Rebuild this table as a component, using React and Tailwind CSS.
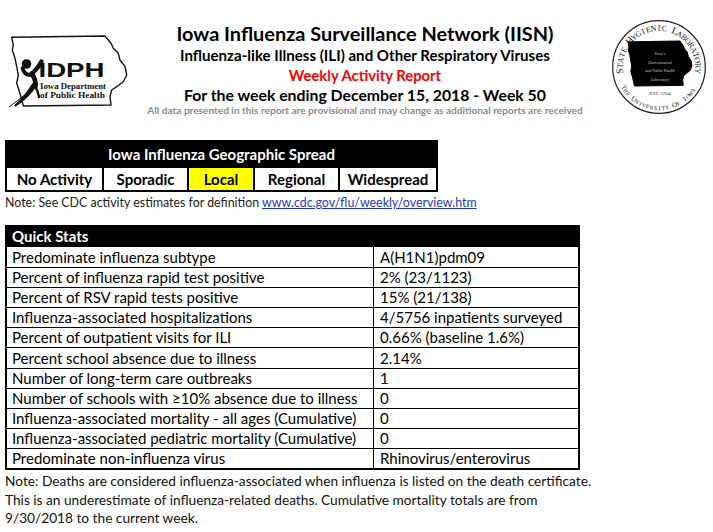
import React from "react";

const IOWA_PTS = [
  [6.7, 7.3], [100, 6], [106, 13.3], [108.3, 18.3], [113.3, 23.3], [115, 30], [120, 36.7],
  [121.7, 45], [118.3, 51.7], [111.7, 56.7], [106.7, 60], [105, 66.7], [106, 75], [18.3, 76],
  [15, 63.3], [11.7, 53.3], [13.3, 45], [11.7, 36.7], [10, 28.3], [7.3, 20], [8.3, 15],
];

function iowaPoints(ox, oy, sx, sy) {
  return IOWA_PTS.map(([x, y]) => `${(ox + (x - 6.7) * sx).toFixed(2)},${(oy + (y - 6) * sy).toFixed(2)}`).join(" ");
}

function IdphLogo() {
  return (
    <svg width="125" height="78" viewBox="0 0 125 78">
      <polygon points={iowaPoints(6.7, 6, 1, 1)} fill="white" stroke="#111" strokeWidth="1.4" strokeLinejoin="round" />
      <circle cx="21.5" cy="34" r="4.8" fill="#111" />
      <path d="M17.5,38 Q19,45 25.5,45" stroke="#111" strokeWidth="3.8" fill="none" strokeLinecap="round" />
      <path d="M26,44 Q32,40 36.5,31.5" stroke="#111" strokeWidth="4.4" fill="none" strokeLinecap="round" />
      <path d="M27,44 Q31,50 30.5,56" stroke="#111" strokeWidth="4.8" fill="none" strokeLinecap="round" />
      <path d="M31,55 Q25,66 10,76 Q22,64 28,54 Z" fill="#111" stroke="#111" strokeWidth="1.8" />
      <path d="M30,56 Q33,61 34,67" stroke="#111" strokeWidth="2.4" fill="none" strokeLinecap="round" />
      <path d="M20,65 Q12,71 4,77" stroke="#111" strokeWidth="1" fill="none" />
      <text x="33.5" y="47" fontFamily="'Liberation Sans', Arial, sans-serif" fontWeight="700" fontSize="20.5" textLength="66" lengthAdjust="spacingAndGlyphs" fill="#111">IDPH</text>
      <text x="35" y="59.3" fontFamily="'Liberation Serif', serif" fontWeight="700" fontSize="8.8" textLength="66" lengthAdjust="spacingAndGlyphs" fill="#111">Iowa Department</text>
      <text x="35" y="68" fontFamily="'Liberation Serif', serif" fontWeight="700" fontSize="8.8" textLength="65" lengthAdjust="spacingAndGlyphs" fill="#111">of Public Health</text>
    </svg>
  );
}

function ArcLetters({ text, start, step, r, big, small, bottom }) {
  let isStart = true;
  return text.split("").map((ch, i) => {
    const first = isStart;
    isStart = ch === " ";
    if (ch === " ") return null;
    const deg = start + i * step;
    const rad = (deg * Math.PI) / 180;
    const x = 49 + r * Math.cos(rad);
    const y = 49 + r * Math.sin(rad);
    const rot = bottom ? deg - 90 : deg + 90;
    return (
      <text
        key={i}
        x={x}
        y={y}
        transform={`rotate(${rot} ${x} ${y})`}
        textAnchor="middle"
        fontFamily="'Liberation Serif', serif"
        fontSize={first ? big : small}
        fill="#222"
      >
        {ch}
      </text>
    );
  });
}

function Seal() {
  const sx = 64 / 115;
  const sy = 45 / 70;
  return (
    <svg width="98" height="98" viewBox="0 0 98 98">
      <circle cx="49" cy="49" r="46.3" fill="white" stroke="#222" strokeWidth="1.2" />
      <ArcLetters text="STATE HYGIENIC LABORATORY" start={-186} step={8} r={36.3} big={10} small={8} />
      <ArcLetters text="THE UNIVERSITY OF IOWA" start={150} step={-5.5} r={43} big={7} small={5.6} bottom />
      <polygon points={iowaPoints(18, 23, sx, sy)} fill="black" stroke="black" strokeWidth="1" strokeLinejoin="round" />
      <g fontFamily="'Liberation Serif', serif" fontStyle="italic" fontSize="4" fill="#cfcfcf" textAnchor="middle">
        <text x="50" y="37">Iowa's</text>
        <text x="50" y="45.5">Environmental</text>
        <text x="50" y="54">and Public Health</text>
        <text x="50" y="62.5">Laboratory</text>
      </g>
      <text x="50" y="76.5" fontFamily="'Liberation Serif', serif" fontSize="5" fill="#333" textAnchor="middle">EST. 1904</text>
    </svg>
  );
}

const spread = [
  { label: "No Activity", cls: "" },
  { label: "Sporadic", cls: "" },
  { label: "Local", cls: "bg-[#ffff00]" },
  { label: "Regional", cls: "" },
  { label: "Widespread", cls: "" },
];

const stats = [
  ["Predominate influenza subtype", "A(H1N1)pdm09"],
  ["Percent of influenza rapid test positive", "2% (23/1123)"],
  ["Percent of RSV rapid tests positive", "15% (21/138)"],
  ["Influenza-associated hospitalizations", "4/5756 inpatients surveyed"],
  ["Percent of outpatient visits for ILI", "0.66% (baseline 1.6%)"],
  ["Percent school absence due to illness", "2.14%"],
  ["Number of long-term care outbreaks", "1"],
  ["Number of schools with \u226510% absence due to illness", "0"],
  ["Influenza-associated mortality - all ages (Cumulative)", "0"],
  ["Influenza-associated pediatric mortality (Cumulative)", "0"],
  ["Predominate non-influenza virus", "Rhinovirus/enterovirus"],
];

export default function App() {
  return (
    <div className="w-[713px] h-[532px] overflow-hidden bg-white text-black font-['Lato',sans-serif]">
      <header className="flex h-[140px]">
        <div className="w-[130px] shrink-0 pl-[5px] pt-[30px]">
          <IdphLogo />
        </div>
        <div className="flex-1 flex flex-col items-center pt-[21px] pr-[10px]">
          <h1 className="text-[19.9px] leading-[24px] font-bold">Iowa Influenza Surveillance Network (IISN)</h1>
          <p className="text-[15.1px] leading-[20px] font-bold">Influenza-like Illness (ILI) and Other Respiratory Viruses</p>
          <p className="text-[14.8px] leading-[20px] font-bold text-[#ff0000]">Weekly Activity Report</p>
          <p className="text-[15.8px] leading-[20px] font-bold">For the week ending December 15, 2018 - Week 50</p>
          <p className="text-[10.1px] leading-[10px] font-bold text-[#8c8c8c]">All data presented in this report are provisional and may change as additional reports are received</p>
        </div>
        <div className="w-[103px] shrink-0 pt-[18px]">
          <Seal />
        </div>
      </header>

      <section className="ml-[5px] w-[433px] border-2 border-black border-t-0">
        <div className="h-[28px] bg-black text-white font-bold text-[15px] flex items-center justify-center">
          Iowa Influenza Geographic Spread
        </div>
        <div className="grid grid-cols-[97px_85px_66px_85px_1fr] h-[22px]">
          {spread.map((s, i) => (
            <div
              key={s.label}
              className={`flex items-center justify-center font-bold text-[15px] leading-none ${s.cls} ${i < 4 ? "border-r-2 border-black" : ""}`}
            >
              {s.label}
            </div>
          ))}
        </div>
      </section>
      <p className="ml-[5px] mt-[2px] text-[12.4px] leading-[18px] text-[#222]">
        Note: See CDC activity estimates for definition{" "}
        <span className="text-[#1d36d1] underline">www.cdc.gov/flu/weekly/overview.htm</span>
      </p>

      <section className="ml-[5px] mt-[13px] w-[575px] border-2 border-black border-t-0">
        <div className="h-[22px] bg-black text-white font-bold text-[15px] flex items-center pl-[5px]">
          Quick Stats
        </div>
        {stats.map(([k, v], i) => (
          <div
            key={k}
            className={`grid grid-cols-[367px_1fr] h-[20.1px] text-[15px] leading-none ${i > 0 ? "border-t border-black" : ""}`}
          >
            <div className="flex items-center pl-[5px] border-r-[1.5px] border-black">{k}</div>
            <div className="flex items-center pl-[6px]">{v}</div>
          </div>
        ))}
      </section>
      <p className="ml-[5px] mt-[2px] w-[680px] text-[13.7px] leading-[18.7px] text-[#111]">
        Note: Deaths are considered influenza-associated when influenza is listed on the death certificate.
        <br />
        This is an underestimate of influenza-related deaths. Cumulative mortality totals are from
        <br />
        9/30/2018 to the current week.
      </p>
    </div>
  );
}
